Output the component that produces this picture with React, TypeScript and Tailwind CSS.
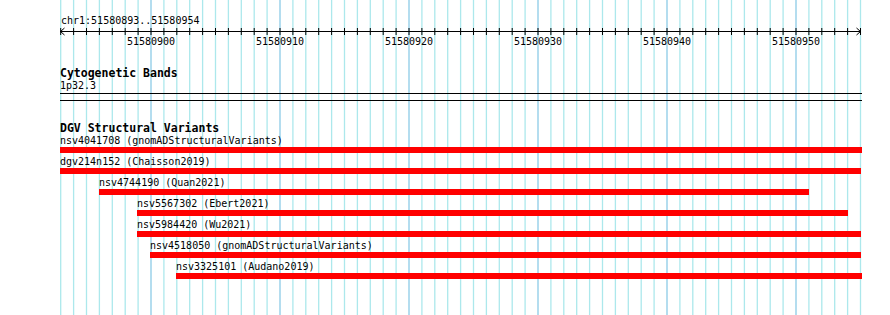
import React from "react";

const START = 51580893;
const PX = 12.9;
const X0 = 60.7;

const gridLines = Array.from({ length: 63 }, (_, k) => ({
  x: X0 + k * PX,
  major: (START + k) % 10 === 0,
}));

const majors = [51580900, 51580910, 51580920, 51580930, 51580940, 51580950];

const variants = [
  { label: "nsv4041708 (gnomADStructuralVariants)", left: 0, width: 802 },
  { label: "dgv214n152 (Chaisson2019)", left: 0, width: 801 },
  { label: "nsv4744190 (Quan2021)", left: 39, width: 710 },
  { label: "nsv5567302 (Ebert2021)", left: 77, width: 711 },
  { label: "nsv5984420 (Wu2021)", left: 77, width: 724 },
  { label: "nsv4518050 (gnomADStructuralVariants)", left: 90, width: 711 },
  { label: "nsv3325101 (Audano2019)", left: 116, width: 686 },
];

function Grid() {
  return (
    <svg className="absolute inset-0" width={890} height={315}>
      {gridLines.map((g, i) => (
        <line
          key={i}
          x1={g.x}
          x2={g.x}
          y1={0}
          y2={315}
          stroke={g.major ? "#8ccbe6" : "#ace8ec"}
          strokeWidth={1.3}
        />
      ))}
    </svg>
  );
}

function Axis() {
  // svg spans x 60..862 (content area), top at y=27
  const off = 60;
  return (
    <svg width={802} height={20} className="block overflow-visible">
      <line x1={0} x2={801} y1={4.5} y2={4.5} stroke="#000" strokeWidth={1} />
      {gridLines.map((g, i) => (
        <line
          key={i}
          x1={g.x - off}
          x2={g.x - off}
          y1={1}
          y2={8}
          stroke="#000"
          strokeWidth={1}
        />
      ))}
      <polyline points="4.5,1 0.5,4.5 4.5,8" fill="none" stroke="#000" strokeWidth={1} />
      <polyline points="796.5,1 800.5,4.5 796.5,8" fill="none" stroke="#000" strokeWidth={1} />
      {majors.map((m) => (
        <text
          key={m}
          x={X0 + (m - START) * PX - off}
          y={17.5}
          textAnchor="middle"
          fontFamily="'DejaVu Sans Mono', monospace"
          fontSize={10}
          fill="#000"
        >
          {m}
        </text>
      ))}
    </svg>
  );
}

export default function App() {
  return (
    <div className="relative w-[890px] h-[315px] overflow-hidden bg-white text-black font-['DejaVu_Sans_Mono',monospace]">
      <Grid />
      <div className="relative flex flex-col pl-[60px] w-[862px] pt-[15px]">
        <div className="text-[10px] leading-[12px] pl-px">chr1:51580893..51580954</div>
        <Axis />
        <div className="mt-[20px] text-[11.5px] leading-[13px] font-bold">Cytogenetic Bands</div>
        <div className="text-[10px] leading-[12px]">1p32.3</div>
        <div className="mt-px h-px bg-black" />
        <div className="mt-[6px] h-px bg-black" />
        <div className="mt-[21px] text-[11.5px] leading-[13px] font-bold">DGV Structural Variants</div>
        <div className="flex flex-col gap-[3px]">
          {variants.map((v) => (
            <div key={v.label} className="flex flex-col" style={{ paddingLeft: v.left }}>
              <div className="text-[10px] leading-[12px] whitespace-nowrap">{v.label}</div>
              <div className="h-[6px] bg-[#ff0000]" style={{ width: v.width }} />
            </div>
          ))}
        </div>
      </div>
    </div>
  );
}
